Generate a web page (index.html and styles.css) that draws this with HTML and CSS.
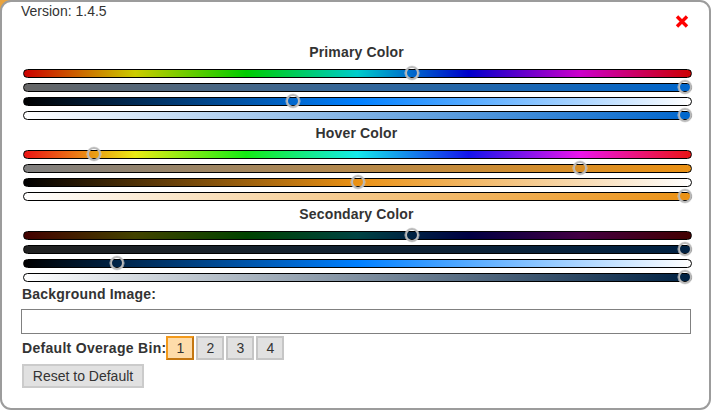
FILE: index.html
```html
<!DOCTYPE html>
<html>
<head>
<meta charset="utf-8">
<link rel="stylesheet" href="styles.css">
</head>
<body>
<div class="panel">
  <div class="version">Version: 1.4.5</div>
  <button class="close" aria-label="Close">
    <svg width="14" height="13" viewBox="0 0 14 13"><path d="M2 1.5 L12 11.5 M12 1.5 L2 11.5" stroke="#ff0000" stroke-width="3.4" fill="none"/></svg>
  </button>

  <div class="sections">
    <section class="color-section">
      <div class="section-title">Primary Color</div>
      <div class="slider-row"><div class="track" style="background:linear-gradient(to right,hsl(0,100%,40%),hsl(60,100%,40%),hsl(120,100%,40%),hsl(180,100%,40%),hsl(240,100%,40%),hsl(300,100%,40%),hsl(360,100%,40%))"><span class="thumb" style="left:381px"></span></div></div>
      <div class="slider-row"><div class="track" style="background:linear-gradient(to right,hsl(210,0%,40%),hsl(210,100%,40%))"><span class="thumb" style="left:654px"></span></div></div>
      <div class="slider-row"><div class="track" style="background:linear-gradient(to right,#000,hsl(210,100%,50%),#fff)"><span class="thumb" style="left:262px"></span></div></div>
      <div class="slider-row"><div class="track" style="background:linear-gradient(to right,#fff,hsl(210,100%,40%))"><span class="thumb" style="left:654px"></span></div></div>
    </section>

    <section class="color-section">
      <div class="section-title">Hover Color</div>
      <div class="slider-row"><div class="track" style="background:linear-gradient(to right,hsl(0,84%,50%),hsl(60,84%,50%),hsl(120,84%,50%),hsl(180,84%,50%),hsl(240,84%,50%),hsl(300,84%,50%),hsl(360,84%,50%))"><span class="thumb" style="left:63px"></span></div></div>
      <div class="slider-row"><div class="track" style="background:linear-gradient(to right,hsl(35,0%,50%),hsl(35,84%,50%))"><span class="thumb" style="left:549px"></span></div></div>
      <div class="slider-row"><div class="track" style="background:linear-gradient(to right,#000,hsl(35,84%,50%),#fff)"><span class="thumb" style="left:327px"></span></div></div>
      <div class="slider-row"><div class="track" style="background:linear-gradient(to right,#fff,hsl(35,84%,50%))"><span class="thumb" style="left:654px"></span></div></div>
    </section>

    <section class="color-section">
      <div class="section-title">Secondary Color</div>
      <div class="slider-row"><div class="track" style="background:linear-gradient(to right,hsl(0,100%,13%),hsl(60,100%,13%),hsl(120,100%,13%),hsl(180,100%,13%),hsl(240,100%,13%),hsl(300,100%,13%),hsl(360,100%,13%))"><span class="thumb" style="left:381px"></span></div></div>
      <div class="slider-row"><div class="track" style="background:linear-gradient(to right,hsl(210,0%,13%),hsl(210,100%,13%))"><span class="thumb" style="left:654px"></span></div></div>
      <div class="slider-row"><div class="track" style="background:linear-gradient(to right,#000,hsl(210,100%,50%),#fff)"><span class="thumb" style="left:86px"></span></div></div>
      <div class="slider-row"><div class="track" style="background:linear-gradient(to right,#fff,hsl(210,100%,13%))"><span class="thumb" style="left:654px"></span></div></div>
    </section>
  </div>

  <div class="field-label">Background Image:</div>
  <input class="text-input" type="text">

  <div class="bin-row">
    <span class="field-label inline">Default Overage Bin:</span>
    <button class="bin-btn active">1</button>
    <button class="bin-btn">2</button>
    <button class="bin-btn">3</button>
    <button class="bin-btn">4</button>
  </div>

  <button class="reset-btn">Reset to Default</button>
</div>
</body>
</html>
```

FILE: styles.css
```css
html, body {
  margin: 0;
  padding: 0;
  background: #ffffff;
}

body {
  position: relative;
  width: 711px;
  height: 410px;
  overflow: hidden;
  font-family: "Liberation Sans", Arial, sans-serif;
  font-size: 14px;
  color: #333333;
}

body::before {
  content: "";
  position: absolute;
  left: 0;
  top: 0;
  width: 14px;
  height: 14px;
  background: #e9a33e;
  z-index: 0;
}

.panel {
  position: relative;
  z-index: 1;
  box-sizing: border-box;
  width: 711px;
  height: 410px;
  background: #ffffff;
  border: 2px solid #9c9c9c;
  border-radius: 11px;
  padding: 1px 17px 0 19px;
  display: flex;
  flex-direction: column;
}

.version {
  line-height: 16px;
  height: 16px;
}

.close {
  position: absolute;
  top: 13px;
  right: 20px;
  width: 14px;
  height: 13px;
  padding: 0;
  margin: 0;
  border: 0;
  background: transparent;
  display: block;
}

.close svg {
  display: block;
}

.sections {
  margin-top: 23px;
  display: flex;
  flex-direction: column;
}

.color-section {
  display: flex;
  flex-direction: column;
}

.section-title {
  font-weight: bold;
  text-align: center;
  line-height: 16px;
  height: 16px;
  padding-top: 2px;
  margin-bottom: 7px;
  letter-spacing: 0.15px;
}

.slider-row {
  height: 14px;
  padding-left: 2px;
}

.track {
  position: relative;
  box-sizing: border-box;
  height: 9px;
  margin-top: 2px;
  border: 1px solid #000000;
  border-radius: 5px;
}

.thumb {
  position: absolute;
  top: -4px;
  box-sizing: border-box;
  width: 14px;
  height: 14px;
  border: 2px solid #bababa;
  border-radius: 50%;
  background: transparent;
  box-shadow: 0 0 0 0.5px rgba(220, 220, 220, 0.8);
}

.field-label {
  font-weight: bold;
  line-height: 16px;
  margin-top: 1px;
  margin-left: 1px;
  letter-spacing: 0.2px;
}

.field-label.inline {
  margin-top: 0;
}

.text-input {
  box-sizing: border-box;
  width: 670px;
  height: 25px;
  margin: 7px 0 0 0;
  border: 1px solid #808080;
  padding: 0 4px;
  font-family: "Liberation Sans", Arial, sans-serif;
  font-size: 14px;
  background: #ffffff;
}

.bin-row {
  display: flex;
  align-items: center;
  gap: 2px;
  margin-top: 2px;
  height: 24px;
}

.bin-row .field-label {
  margin-right: -2px;
  letter-spacing: 0.3px;
}

.bin-btn {
  box-sizing: border-box;
  width: 28px;
  height: 24px;
  padding: 0;
  margin: 0;
  border: 2px solid #c6c6c6;
  background: #e1e1e1;
  font-family: "Liberation Sans", Arial, sans-serif;
  font-size: 14px;
  color: #333333;
}

.bin-btn.active {
  background: #fedcaa;
  border-color: #f39a1c #c47712 #c47712 #f39a1c;
}

.reset-btn {
  align-self: flex-start;
  box-sizing: border-box;
  width: 122px;
  height: 24px;
  margin: 4px 0 0 1px;
  padding: 0;
  border: 2px solid #cbcbcb;
  background: #e1e1e1;
  font-family: "Liberation Sans", Arial, sans-serif;
  font-size: 14px;
  color: #333333;
}
```
